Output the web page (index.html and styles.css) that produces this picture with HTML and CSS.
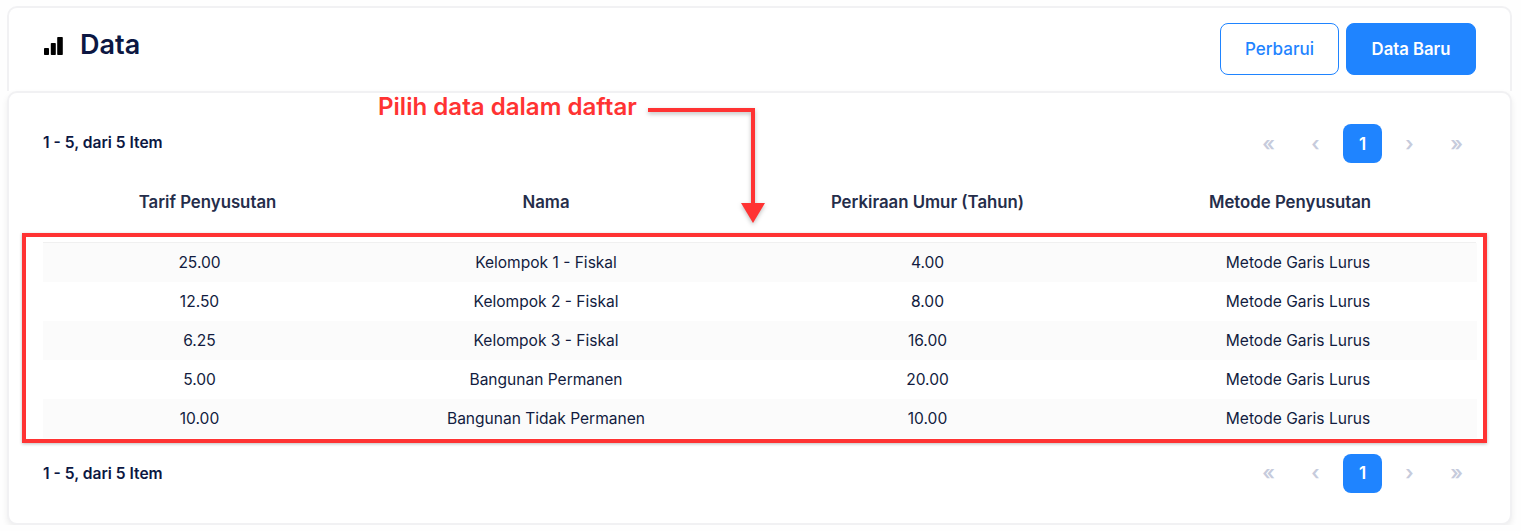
FILE: index.html
```html
<!DOCTYPE html>
<html lang="en">

<head>
    <meta charset="UTF-8">
    <meta name="viewport" content="width=device-width, initial-scale=1.0">
    <title>Data</title>
    <link rel="stylesheet" href="styles.css">
</head>

<body>
<div class="page">
    <!-- Header -->
    <header class="card card-header">
        <div class="title">
            <svg class="title-icon" width="20" height="18" viewBox="0 0 20 18" aria-hidden="true">
                <rect x="0" y="11" width="5" height="7" rx="0.8"></rect>
                <rect x="6.8" y="6" width="5" height="12" rx="0.8"></rect>
                <rect x="13.2" y="0" width="5.6" height="18" rx="0.8"></rect>
            </svg>
            <h1>Data</h1>
        </div>
        <div class="actions">
            <button class="btn btn-outline">Perbarui</button>
            <button class="btn btn-primary">Data Baru</button>
        </div>
    </header>

    <!-- List -->
    <main class="card card-body">
        <div class="pager-row">
            <strong class="count">1 - 5, dari 5 Item</strong>
            <nav class="pager">
                <span class="page-link">«</span>
                <span class="page-link">‹</span>
                <span class="page-link active">1</span>
                <span class="page-link">›</span>
                <span class="page-link">»</span>
            </nav>
        </div>

        <!-- Head and rows size their columns separately -->
        <table class="head-table">
            <colgroup>
                <col class="head-rate">
                <col class="head-name">
                <col class="head-age">
                <col class="head-method">
            </colgroup>
            <thead>
                <tr>
                    <th>Tarif Penyusutan</th>
                    <th>Nama</th>
                    <th>Perkiraan Umur (Tahun)</th>
                    <th>Metode Penyusutan</th>
                </tr>
            </thead>
        </table>

        <table class="data-table">
            <colgroup>
                <col class="col-rate">
                <col class="col-name">
                <col class="col-age">
                <col class="col-method">
            </colgroup>
            <tbody>
                <tr><td>25.00</td><td>Kelompok 1 - Fiskal</td><td>4.00</td><td>Metode Garis Lurus</td></tr>
                <tr><td>12.50</td><td>Kelompok 2 - Fiskal</td><td>8.00</td><td>Metode Garis Lurus</td></tr>
                <tr><td>6.25</td><td>Kelompok 3 - Fiskal</td><td>16.00</td><td>Metode Garis Lurus</td></tr>
                <tr><td>5.00</td><td>Bangunan Permanen</td><td>20.00</td><td>Metode Garis Lurus</td></tr>
                <tr><td>10.00</td><td>Bangunan Tidak Permanen</td><td>10.00</td><td>Metode Garis Lurus</td></tr>
            </tbody>
        </table>

        <div class="pager-row pager-row-bottom">
            <strong class="count">1 - 5, dari 5 Item</strong>
            <nav class="pager">
                <span class="page-link">«</span>
                <span class="page-link">‹</span>
                <span class="page-link active">1</span>
                <span class="page-link">›</span>
                <span class="page-link">»</span>
            </nav>
        </div>
    </main>
</div>

<!-- Annotation drawn over the screenshot -->
<div class="note-box"></div>
<div class="note-text">Pilih data dalam daftar</div>
<svg class="note-arrow" width="130" height="125" viewBox="0 0 130 125" aria-hidden="true">
    <path d="M1 5H106V100" fill="none" stroke="#ff3333" stroke-width="4"></path>
    <path d="M94 98H118L106 118Z" fill="#ff3333"></path>
</svg>
</body>

</html>
```

FILE: styles.css
```css
* {
    box-sizing: border-box;
}

body {
    margin: 0;
    background-color: #fefefe;
    color: #0f1a3d;
    font-family: Inter, "Liberation Sans", sans-serif;
}

.page {
    padding: 6px 9px 0 7px;
}

.card {
    background: #ffffff;
    border: 2px solid #f1f1f3;
    border-radius: 10px;
}

.card-header {
    display: flex;
    justify-content: space-between;
    height: 85px;
    padding: 15px 34px 0 35px;
    border-bottom-left-radius: 0;
    border-bottom-right-radius: 0;
    border-bottom: 0;
}

.title {
    display: flex;
    align-items: flex-start;
    gap: 16px;
    padding-top: 3px;
}

.title-icon {
    margin-top: 11px;
    fill: #000000;
}

h1 {
    margin: 1px 0 0;
    font-size: 27px;
    font-weight: 600;
    line-height: 36px;
    color: #0c1742;
}

.actions {
    display: flex;
    gap: 7px;
}

.btn {
    height: 52px;
    border-radius: 8px;
    border: 1px solid #1f84ff;
    font-family: inherit;
    font-size: 17px;
    font-weight: 500;
    cursor: pointer;
}

.btn-outline {
    width: 119px;
    background: #ffffff;
    color: #1f84ff;
}

.btn-primary {
    width: 130px;
    background: #1f84ff;
    color: #ffffff;
    font-weight: 600;
    font-size: 16.7px;
}

.card-body {
    height: 434px;
    padding: 31px 34px 0 34px;
    box-shadow: 0 3px 6px rgba(0, 0, 0, 0.07);
}

.pager-row {
    display: flex;
    justify-content: space-between;
    align-items: center;
    height: 39px;
}

.pager-row-bottom {
    margin-top: 16px;
}

.count {
    padding-bottom: 2px;
    font-size: 15.6px;
    font-weight: 600;
    color: #0c1742;
}

.pager-row-bottom .count {
    padding: 1px 0 0;
}

.pager {
    display: flex;
    gap: 8px;
}

.page-link {
    display: flex;
    align-items: center;
    justify-content: center;
    width: 39px;
    height: 39px;
    border-radius: 8px;
    font-size: 20px;
    font-weight: 600;
    color: #c6cbdc;
}

.page-link.active {
    background: #1f84ff;
    color: #ffffff;
    font-size: 17px;
}

.head-table,
.data-table {
    width: 1433px;
    border-collapse: collapse;
    table-layout: fixed;
}

.head-table {
    border-bottom: 1px solid #f0f0f0;
}

.head-rate {
    width: 329px;
}

.head-name {
    width: 348px;
}

.head-age {
    width: 415px;
}

.head-method {
    width: 341px;
}

.head-table th {
    height: 79px;
    padding: 0 0 1px;
    font-size: 16.8px;
    font-weight: 600;
    color: #252d4a;
}

.head-table th:last-child {
    padding-right: 31px;
}

.col-rate {
    width: 313px;
}

.col-name {
    width: 380px;
}

.col-age {
    width: 383px;
}

.col-method {
    width: 358px;
}

.data-table {
    font-size: 15.55px;
}

.data-table td {
    height: 39px;
    padding: 0;
    text-align: center;
    color: #121c40;
}

.data-table tr:nth-child(odd) {
    background-color: #fbfbfb;
}

.note-box {
    position: absolute;
    left: 22px;
    top: 233px;
    width: 1465px;
    height: 210px;
    border: 4px solid #ff3333;
    box-shadow: 0 1px 3px rgba(0, 0, 0, 0.25);
}

.note-text {
    position: absolute;
    left: 378px;
    top: 93px;
    font-size: 24.1px;
    font-weight: 600;
    line-height: 28px;
    color: #ff3333;
    white-space: nowrap;
}

.note-arrow {
    position: absolute;
    left: 647px;
    top: 105px;
    filter: drop-shadow(0 2px 2px rgba(0, 0, 0, 0.25));
}
```
